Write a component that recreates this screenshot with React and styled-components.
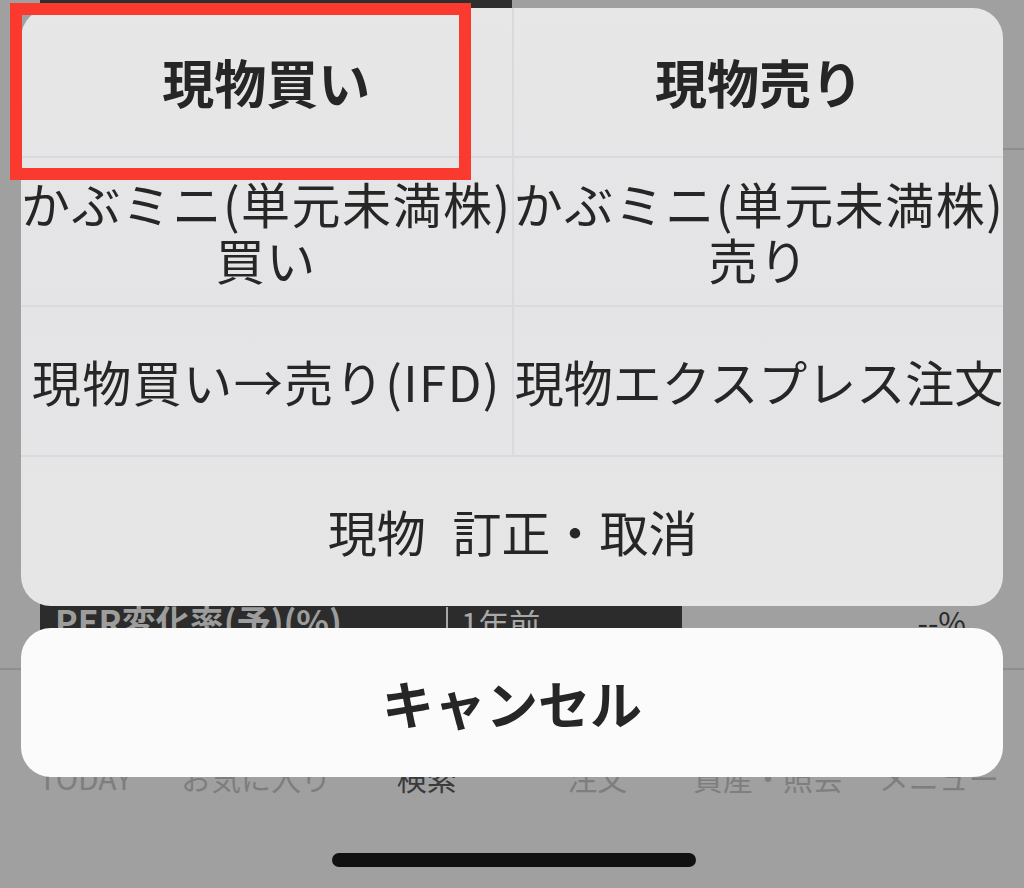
import React from "react";
import styled, { createGlobalStyle } from "styled-components";

const GlobalStyle = createGlobalStyle`
  html, body { margin: 0; padding: 0; }
  body {
    font-family: "Noto Sans CJK JP", "Noto Sans", sans-serif;
    background: #a0a0a0;
  }
  * { box-sizing: border-box; }
`;

const Screen = styled.div`
  position: relative;
  width: 1024px;
  height: 888px;
  overflow: hidden;
  background: #a0a0a0;
  font-family: "Noto Sans CJK JP", "Noto Sans", sans-serif;
`;

/* ---------- dimmed app underneath ---------- */
const AppLayer = styled.div`
  display: flex;
  flex-direction: column;
  height: 100%;
`;

const TopStrip = styled.div`
  margin-left: 40px;
  width: 472px;
  height: 8px;
  background: #2e2e2e;
`;

const InfoRow = styled.div`
  display: flex;
  justify-content: flex-end;
  align-items: flex-end;
  height: 142px;
`;

const EdgeLine = styled.div`
  width: 40px;
  border-bottom: 2px solid #8e8e8e;
`;

const Body = styled.div`
  flex: 1;
  display: flex;
  flex-direction: column;
  justify-content: flex-end;
`;

const PerRow = styled.div`
  display: flex;
  align-items: stretch;
  height: 57px;
  margin-bottom: 21px;
`;

const PerLabelCell = styled.div`
  display: flex;
  margin-left: 40px;
  width: 642px;
  background: #2c2c2c;
  padding-left: 15px;
`;

const PerLabel = styled.span`
  width: 391px;
  padding-top: 14px;
  font-size: 34px;
  line-height: 1;
  font-weight: 700;
  color: #9d9d9d;
  white-space: nowrap;
`;

const PerPeriod = styled.span`
  flex: 1;
  border-left: 2px solid #a8a8a8;
  margin-top: 17px;
  padding-left: 13px;
  font-size: 31px;
  line-height: 1;
  color: #a8a8a8;
`;

const PerValue = styled.span`
  margin-left: auto;
  margin-right: 58px;
  padding-top: 16px;
  font-size: 30px;
  line-height: 1;
  color: #2a2a2a;
`;

const TabBar = styled.nav`
  display: grid;
  grid-template-columns: repeat(6, 1fr);
  height: 220px;
  border-top: 2px solid #8e8e8e;
  padding-top: 92px;
`;

const TabLabel = styled.span`
  text-align: center;
  font-size: 30px;
  line-height: 1;
  white-space: nowrap;
  color: ${(p) => (p.$active ? "#3a3a3a" : "#7e7e7e")};
`;

/* ---------- action sheet overlay ---------- */
const Overlay = styled.div`
  position: absolute;
  inset: 0;
  display: flex;
  flex-direction: column;
  padding: 8px 21px 0 21px;
`;

const Sheet = styled.div`
  display: grid;
  grid-template-columns: 1fr 1fr;
  grid-template-rows: repeat(4, 1fr);
  height: 598px;
  border-radius: 30px;
  overflow: hidden;
  background: linear-gradient(180deg, #e7e7e8 0%, #e4e4e6 50%, #e6e6e7 100%);
`;

const Action = styled.div`
  display: flex;
  align-items: center;
  justify-content: center;
  text-align: center;
  white-space: nowrap;
  color: #262626;
  font-size: ${(p) => (p.$bold ? "52px" : "49px")};
  font-weight: ${(p) => (p.$bold ? 700 : 400)};
  line-height: 1.14;
  letter-spacing: ${(p) => (p.$spread ? "1.5px" : "0")};
  word-spacing: ${(p) => (p.$wide ? "16px" : "0")};
  grid-column: ${(p) => (p.$full ? "1 / span 2" : "auto")};
  border-bottom: ${(p) => (p.$last ? "none" : "2px solid #d9d9de")};
  border-right: ${(p) => (p.$left ? "2px solid #d9d9de" : "none")};
`;

const Cancel = styled.div`
  display: flex;
  align-items: center;
  justify-content: center;
  margin-top: 22px;
  height: 149px;
  border-radius: 30px;
  background: #fbfbfb;
  color: #262626;
  font-size: 52px;
  font-weight: 700;
  line-height: 1;
`;

const HomeIndicator = styled.div`
  align-self: center;
  margin-top: 76px;
  margin-left: 4px;
  width: 364px;
  height: 14px;
  border-radius: 7px;
  background: #111111;
`;

const Highlight = styled.div`
  position: absolute;
  left: 10px;
  top: 3px;
  width: 461px;
  height: 177px;
  border: 12px solid #fa3a2f;
  pointer-events: none;
`;

const tabs = ["TODAY", "お気に入り", "検索", "注文", "資産・照会", "メニュー"];

export default function App() {
  return (
    <>
      <GlobalStyle />
      <Screen>
        <AppLayer>
          <TopStrip />
          <InfoRow>
            <EdgeLine />
          </InfoRow>
          <Body>
            <PerRow>
              <PerLabelCell>
                <PerLabel>PER変化率(予)(%)</PerLabel>
                <PerPeriod>1年前</PerPeriod>
              </PerLabelCell>
              <PerValue>--%</PerValue>
            </PerRow>
          </Body>
          <TabBar>
            {tabs.map((t) => (
              <TabLabel key={t} $active={t === "検索"}>
                {t}
              </TabLabel>
            ))}
          </TabBar>
        </AppLayer>

        <Overlay>
          <Sheet>
            <Action $bold $left>現物買い</Action>
            <Action $bold>現物売り</Action>
            <Action $left $spread>
              かぶミニ(単元未満株)
              <br />
              買い
            </Action>
            <Action $spread>
              かぶミニ(単元未満株)
              <br />
              売り
            </Action>
            <Action $left $spread>現物買い→売り(IFD)</Action>
            <Action>現物エクスプレス注文</Action>
            <Action $full $last $wide>
              現物 訂正・取消
            </Action>
          </Sheet>
          <Cancel>キャンセル</Cancel>
          <HomeIndicator />
        </Overlay>

        <Highlight />
      </Screen>
    </>
  );
}
